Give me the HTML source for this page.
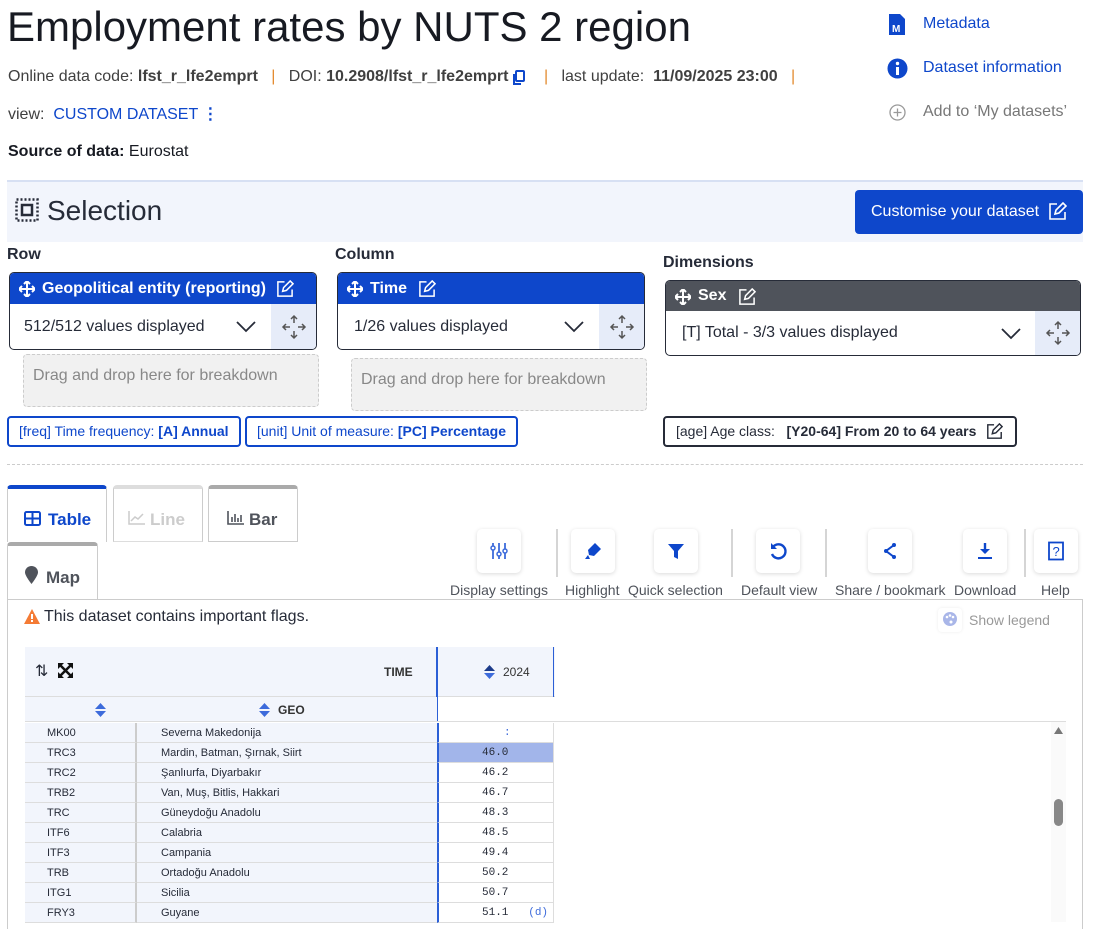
<!DOCTYPE html>
<html><head><meta charset="utf-8"><style>
*{box-sizing:border-box;margin:0;padding:0}
body{width:1101px;height:922px;overflow:hidden;background:#fff;font-family:"Liberation Sans",Arial,sans-serif;color:#262b38;position:relative}
.a{position:absolute;white-space:nowrap}
.blue{color:#0e47cb}
.dbox{position:absolute;border:1px solid #262b38;border-radius:5px;overflow:hidden;background:#fff}
.dh{height:31px;background:#0e47cb;color:#fff;font-weight:bold;font-size:16px;line-height:31px;padding-left:32px;position:relative}
.dh svg{position:absolute;top:8px}
.db{position:relative;height:46px;font-size:16px;line-height:46px;padding-left:14px}
.mv{position:absolute;right:0;top:0;width:45px;height:46px;background:#e6ecf9}
.drag{position:absolute;background:#f1f1f1;border:1px dashed #ccc;border-radius:4px;color:#888;font-size:16px;padding:12px 9px}
.chip{position:absolute;height:31px;border:2px solid #0e47cb;border-radius:4px;font-size:14px;color:#0e47cb;line-height:27px;padding:0 10px}
.tab{position:absolute;border:1px solid #ccc;border-top:4px solid #aaa;border-bottom:none;border-radius:4px 4px 0 0;font-size:17px;font-weight:bold;color:#4f535b;line-height:60px;background:#fff}
.tb{position:absolute;top:529px;width:44px;height:44px;border-radius:5px;box-shadow:0 1px 4px rgba(0,0,0,.15);background:#fff}
.tb svg{position:absolute;left:12px;top:12px}
.tl{position:absolute;top:582px;font-size:14px;color:#4f535b;white-space:nowrap}
.sep{position:absolute;top:529px;width:2px;height:48px;background:#d5d5d5}
.row{position:absolute;left:25px;width:530px;height:20px;font-size:11px;line-height:20px}
.row .c{position:absolute;left:0;width:112px;height:20px;background:#f2f5fc;border-right:2px solid #ccc;border-bottom:1px solid #ddd;padding-left:22px}
.row .n{position:absolute;left:112px;width:300px;height:20px;background:#f2f5fc;border-bottom:1px solid #ddd;padding-left:24px}
.row .v{position:absolute;left:412px;width:117px;height:20px;border-left:2px solid #2b5fd6;border-bottom:1px solid #ddd;border-right:1px solid #ddd;font-family:"Liberation Mono",monospace;font-size:11px;padding-left:43px}
</style></head><body>

<div class="a" style="left:7px;top:3px;font-size:42px;color:#171a22">Employment rates by NUTS 2 region</div>
<div class="a" style="left:8px;top:68px;font-size:16px;color:#404040">Online data code: <b>lfst_r_lfe2emprt</b> &nbsp; <span style="color:#e38a2e">|</span> &nbsp; DOI: <b>10.2908/lfst_r_lfe2emprt</b> &nbsp; &nbsp; &nbsp; &nbsp;<span style="color:#e38a2e">|</span> &nbsp; last update: &nbsp;<b>11/09/2025 23:00</b> &nbsp; <span style="color:#e38a2e">|</span></div>
<svg class="a" style="left:512px;top:70px" width="14" height="16" viewBox="0 0 14 16"><rect x="4" y="1" width="8" height="10" rx="1" fill="none" stroke="#0e47cb" stroke-width="2"/><path d="M2 4v10h7" fill="none" stroke="#0e47cb" stroke-width="2"/></svg>
<div class="a" style="left:8px;top:104px;font-size:16px;color:#404040">view: &nbsp;<span class="blue">CUSTOM DATASET</span> <b class="blue">&#8942;</b></div>
<div class="a" style="left:8px;top:143px;font-size:16px;color:#171a22"><b>Source of data:</b> Eurostat</div>

<svg class="a" style="left:889px;top:14px" width="16" height="21" viewBox="0 0 16 21"><path d="M0 0h11l5 5v16H0z" fill="#0e47cb"/><text x="3" y="18" font-size="10" font-weight="bold" fill="#fff" font-family="Liberation Sans">M</text></svg>
<div class="a blue" style="left:923px;top:15px;font-size:16px">Metadata</div>
<svg class="a" style="left:887px;top:58px" width="21" height="21"><circle cx="10.5" cy="10.5" r="10" fill="#0e47cb"/><rect x="9" y="9" width="3" height="8" fill="#fff"/><circle cx="10.5" cy="5.5" r="1.7" fill="#fff"/></svg>
<div class="a blue" style="left:923px;top:59px;font-size:16px">Dataset information</div>
<svg class="a" style="left:889px;top:104px" width="17" height="17"><circle cx="8.5" cy="8.5" r="7.5" fill="none" stroke="#999" stroke-width="1.3"/><path d="M8.5 4.5v8M4.5 8.5h8" stroke="#999" stroke-width="1.3"/></svg>
<div class="a" style="left:923px;top:103px;font-size:16px;color:#777">Add to ‘My datasets’</div>

<div class="a" style="left:7px;top:180px;width:1076px;height:62px;background:#f2f5fc;border-top:2px solid #d7e0f3"></div>
<svg class="a" style="left:15px;top:198px" width="24" height="24" viewBox="0 0 24 24"><rect x="1.5" y="1.5" width="21" height="21" fill="none" stroke="#262b38" stroke-width="2.5" stroke-dasharray="2 2"/><rect x="7" y="7" width="10" height="10" fill="none" stroke="#262b38" stroke-width="2.5"/></svg>
<div class="a" style="left:47px;top:195px;font-size:28px;color:#262b38">Selection</div>
<div class="a" style="left:855px;top:190px;width:228px;height:44px;background:#0e47cb;border-radius:4px;color:#fff;font-size:16px;line-height:44px;padding-left:16px">Customise your dataset</div>
<svg class="a" style="left:1048px;top:202px" width="19" height="19" viewBox="0 0 19 19"><path d="M9 2H2v15h15v-7" fill="none" stroke="#fff" stroke-width="1.6"/><path d="M7 12l1-4 7-7 3 3-7 7z" fill="none" stroke="#fff" stroke-width="1.6"/></svg>

<div class="a" style="left:7px;top:246px;font-size:16px;font-weight:bold">Row</div>
<div class="a" style="left:335px;top:246px;font-size:16px;font-weight:bold">Column</div>
<div class="a" style="left:663px;top:254px;font-size:16px;font-weight:bold">Dimensions</div>

<div class="dbox" style="left:9px;top:272px;width:308px;height:78px">
 <div class="dh"><svg style="left:9px" width="16" height="16" viewBox="0 0 16 16"><path d="M8 0v16M0 8h16M5 3l3-3 3 3M5 13l3 3 3-3M3 5L0 8l3 3M13 5l3 3-3 3" fill="none" stroke="#fff" stroke-width="2"/></svg>Geopolitical entity (reporting) <svg style="left:266px;top:7px" width="18" height="18" viewBox="0 0 19 19"><path d="M9 2H2v15h15v-7" fill="none" stroke="#fff" stroke-width="1.6"/><path d="M7 12l1-4 7-7 3 3-7 7z" fill="none" stroke="#fff" stroke-width="1.6"/></svg></div>
 <div class="db">512/512 values displayed<svg style="position:absolute;left:226px;top:17px" width="20" height="12"><path d="M1 1l9 9 9-9" fill="none" stroke="#262b38" stroke-width="1.8"/></svg><div class="mv"><svg style="position:absolute;left:10px;top:10px" width="26" height="26" viewBox="0 0 26 26"><path d="M13 2v7M13 17v7M2 13h7M17 13h7M10 5l3-3 3 3M10 21l3 3 3-3M5 10l-3 3 3 3M21 10l3 3-3 3" fill="none" stroke="#555" stroke-width="1.5"/></svg></div></div>
</div>
<div class="drag" style="left:23px;top:354px;width:296px;height:53px">Drag and drop here for breakdown</div>

<div class="dbox" style="left:337px;top:272px;width:308px;height:78px">
 <div class="dh"><svg style="left:9px" width="16" height="16" viewBox="0 0 16 16"><path d="M8 0v16M0 8h16M5 3l3-3 3 3M5 13l3 3 3-3M3 5L0 8l3 3M13 5l3 3-3 3" fill="none" stroke="#fff" stroke-width="2"/></svg>Time <svg style="left:80px;top:7px" width="18" height="18" viewBox="0 0 19 19"><path d="M9 2H2v15h15v-7" fill="none" stroke="#fff" stroke-width="1.6"/><path d="M7 12l1-4 7-7 3 3-7 7z" fill="none" stroke="#fff" stroke-width="1.6"/></svg></div>
 <div class="db" style="padding-left:16px">1/26 values displayed<svg style="position:absolute;left:226px;top:17px" width="20" height="12"><path d="M1 1l9 9 9-9" fill="none" stroke="#262b38" stroke-width="1.8"/></svg><div class="mv"><svg style="position:absolute;left:10px;top:10px" width="26" height="26" viewBox="0 0 26 26"><path d="M13 2v7M13 17v7M2 13h7M17 13h7M10 5l3-3 3 3M10 21l3 3 3-3M5 10l-3 3 3 3M21 10l3 3-3 3" fill="none" stroke="#555" stroke-width="1.5"/></svg></div></div>
</div>
<div class="drag" style="left:351px;top:358px;width:296px;height:53px">Drag and drop here for breakdown</div>

<div class="dbox" style="left:665px;top:280px;width:416px;height:76px">
 <div class="dh" style="background:#4f535b;height:30px;line-height:30px"><svg style="left:9px" width="16" height="16" viewBox="0 0 16 16"><path d="M8 0v16M0 8h16M5 3l3-3 3 3M5 13l3 3 3-3M3 5L0 8l3 3M13 5l3 3-3 3" fill="none" stroke="#fff" stroke-width="2"/></svg>Sex <svg style="left:72px;top:7px" width="18" height="18" viewBox="0 0 19 19"><path d="M9 2H2v15h15v-7" fill="none" stroke="#fff" stroke-width="1.6"/><path d="M7 12l1-4 7-7 3 3-7 7z" fill="none" stroke="#fff" stroke-width="1.6"/></svg></div>
 <div class="db" style="padding-left:16px;height:45px;line-height:43px">[T] Total - 3/3 values displayed<svg style="position:absolute;left:335px;top:17px" width="20" height="12"><path d="M1 1l9 9 9-9" fill="none" stroke="#262b38" stroke-width="1.8"/></svg><div class="mv" style="height:45px"><svg style="position:absolute;left:10px;top:9px" width="26" height="26" viewBox="0 0 26 26"><path d="M13 2v7M13 17v7M2 13h7M17 13h7M10 5l3-3 3 3M10 21l3 3 3-3M5 10l-3 3 3 3M21 10l3 3-3 3" fill="none" stroke="#555" stroke-width="1.5"/></svg></div></div>
</div>

<div class="chip" style="left:7px;top:416px;width:234px">[freq] Time frequency: <b>[A] Annual</b></div>
<div class="chip" style="left:245px;top:416px;width:273px">[unit] Unit of measure: <b>[PC] Percentage</b></div>
<div class="chip" style="left:663px;top:416px;width:354px;border-color:#262b38;color:#262b38;padding-left:11px">[age] Age class: &nbsp; <b>[Y20-64] From 20 to 64 years</b></div>
<svg class="a" style="left:986px;top:423px" width="17" height="17" viewBox="0 0 19 19"><path d="M9 2H2v15h15v-7" fill="none" stroke="#262b38" stroke-width="1.6"/><path d="M7 12l1-4 7-7 3 3-7 7z" fill="none" stroke="#262b38" stroke-width="1.6"/></svg>

<div class="a" style="left:7px;top:464px;width:1076px;border-top:1px dashed #ccc"></div>

<div class="tab" style="left:7px;top:485px;width:100px;height:57px;border-top-color:#0e47cb;color:#0e47cb;padding-left:40px;line-height:62px">Table</div>
<svg class="a" style="left:24px;top:511px" width="17" height="15"><rect x="1" y="1" width="15" height="13" rx="1.5" fill="none" stroke="#0e47cb" stroke-width="2"/><path d="M1 7.5h15M8.5 1v13" stroke="#0e47cb" stroke-width="2"/></svg>
<div class="tab" style="left:113px;top:485px;width:90px;height:57px;border-top-color:#ddd;color:#ccc;padding-left:36px;line-height:62px;border-bottom:1px solid #ddd">Line</div>
<svg class="a" style="left:128px;top:511px" width="17" height="14"><path d="M1 0v13h16" fill="none" stroke="#ccc" stroke-width="1.5"/><path d="M3 10l4-4 3 2 5-5" fill="none" stroke="#ccc" stroke-width="1.5"/></svg>
<div class="tab" style="left:208px;top:485px;width:90px;height:57px;padding-left:40px;line-height:62px;border-bottom:1px solid #ccc">Bar</div>
<svg class="a" style="left:227px;top:511px" width="17" height="14"><path d="M1 0v13h16M5 11V6M8 11V3M11 11V7M14 11V4" fill="none" stroke="#4f535b" stroke-width="1.6"/></svg>
<div class="tab" style="left:7px;top:542px;width:91px;height:58px;padding-left:38px;line-height:64px">Map</div>
<svg class="a" style="left:25px;top:566px" width="13" height="18" viewBox="0 0 13 18"><path d="M6.5 0C3 0 0 2.7 0 6.3 0 10 6.5 18 6.5 18S13 10 13 6.3C13 2.7 10 0 6.5 0z" fill="#4f535b"/></svg>

<div class="tb" style="left:477px"><svg width="20" height="20" viewBox="0 0 20 20"><path d="M4 2v16M10 2v16M16 2v16" stroke="#3d6bdb" stroke-width="1.8"/><circle cx="4" cy="7" r="2" fill="#fff" stroke="#3d6bdb" stroke-width="1.5"/><circle cx="10" cy="13" r="2" fill="#fff" stroke="#3d6bdb" stroke-width="1.5"/><circle cx="16" cy="10" r="2" fill="#fff" stroke="#3d6bdb" stroke-width="1.5"/></svg></div>
<div class="tl" style="left:450px">Display settings</div>
<div class="sep" style="left:556px"></div>
<div class="tb" style="left:571px"><svg width="20" height="20" viewBox="0 0 20 20"><path d="M12 2l6 6-7 7-5-1-1-5z" fill="#0e47cb"/><path d="M5 14l-3 4h5z" fill="#0e47cb"/></svg></div>
<div class="tl" style="left:565px">Highlight</div>
<div class="tb" style="left:654px"><svg width="20" height="20" viewBox="0 0 20 20"><path d="M2 3h16l-6 7v8l-4-2v-6z" fill="#0e47cb"/></svg></div>
<div class="tl" style="left:628px">Quick selection</div>
<div class="sep" style="left:731px"></div>
<div class="tb" style="left:756px"><svg width="20" height="20" viewBox="0 0 20 20"><path d="M5 6A7 7 0 1 1 4 13" fill="none" stroke="#0e47cb" stroke-width="2.4"/><path d="M3 2v6h6z" fill="#0e47cb"/></svg></div>
<div class="tl" style="left:741px">Default view</div>
<div class="sep" style="left:825px"></div>
<div class="tb" style="left:868px"><svg width="20" height="20" viewBox="0 0 20 20"><path d="M14 4l-8 6 8 6" fill="none" stroke="#0e47cb" stroke-width="2"/><circle cx="14" cy="4" r="2" fill="#0e47cb"/><circle cx="6" cy="10" r="2" fill="#0e47cb"/><circle cx="14" cy="16" r="2" fill="#0e47cb"/></svg></div>
<div class="tl" style="left:835px">Share / bookmark</div>
<div class="tb" style="left:963px"><svg width="20" height="20" viewBox="0 0 20 20"><path d="M10 2v10" stroke="#0e47cb" stroke-width="2.4"/><path d="M5 8l5 5 5-5z" fill="#0e47cb"/><path d="M3 17h14" stroke="#0e47cb" stroke-width="2"/></svg></div>
<div class="tl" style="left:954px">Download</div>
<div class="sep" style="left:1024px"></div>
<div class="tb" style="left:1034px"><svg width="20" height="20" viewBox="0 0 20 20"><rect x="3" y="1.5" width="14" height="17" fill="none" stroke="#0e47cb" stroke-width="1.8"/><text x="6.5" y="15" font-size="13" fill="#0e47cb" font-family="Liberation Sans">?</text></svg></div>
<div class="tl" style="left:1041px">Help</div>

<div class="a" style="left:7px;top:599px;width:1076px;height:330px;border:1px solid #ccc;border-bottom:none"></div>
<svg class="a" style="left:24px;top:609px" width="16" height="15"><path d="M8 0L16 15H0z" fill="#f47b35"/><rect x="7" y="5" width="2" height="5" fill="#fff"/><rect x="7" y="11" width="2" height="2" fill="#fff"/></svg>
<div class="a" style="left:44px;top:608px;font-size:16px;color:#262b38">This dataset contains important flags.</div>
<div class="a" style="left:938px;top:608px;width:24px;height:24px;border-radius:4px;box-shadow:0 0 3px rgba(0,0,0,.08)"></div>
<svg class="a" style="left:943px;top:612px" width="14" height="14"><circle cx="7" cy="7" r="7" fill="#a9b6e8"/><circle cx="4" cy="5" r="1.3" fill="#fff"/><circle cx="7" cy="3.5" r="1.3" fill="#fff"/><circle cx="10" cy="5" r="1.3" fill="#fff"/><circle cx="8" cy="10" r="1.5" fill="#fff"/></svg>
<div class="a" style="left:969px;top:612px;font-size:14px;color:#999">Show legend</div>

<div class="a" style="left:25px;top:647px;width:530px;height:50px;background:#f2f5fc;border-bottom:1px solid #ddd"></div>
<div class="a" style="left:436px;top:647px;width:2px;height:75px;background:#2b5fd6"></div>
<div class="a" style="left:553px;top:647px;width:1px;height:50px;background:#2b5fd6"></div>
<div class="a" style="left:35px;top:661px;font-size:16px">&#8645;</div>
<svg class="a" style="left:58px;top:663px" width="15" height="15"><path d="M1 1l13 13M14 1L1 14" stroke="#111" stroke-width="2.5"/><path d="M0 0h6L0 6zM15 0v6L9 0zM0 15V9l6 6zM15 15H9l6-6z" fill="#111"/></svg>
<div class="a" style="left:384px;top:665px;font-size:12px;font-weight:bold;color:#333">TIME</div>
<svg class="a" style="left:484px;top:665px" width="11" height="14"><path d="M0 6l5.5-6 5.5 6z" fill="#1c3b8a"/><path d="M0 8l5.5 6 5.5-6z" fill="#3d6bdb"/></svg>
<div class="a" style="left:503px;top:665px;font-size:12px;color:#333">2024</div>
<div class="a" style="left:25px;top:697px;width:412px;height:25px;background:#f2f5fc;border-bottom:1px solid #ddd"></div>
<div class="a" style="left:437px;top:721px;width:629px;height:1px;background:#ddd"></div>
<svg class="a" style="left:95px;top:703px" width="11" height="14"><path d="M0 6l5.5-6 5.5 6zM0 8l5.5 6 5.5-6z" fill="#3d6bdb"/></svg>
<svg class="a" style="left:259px;top:703px" width="11" height="14"><path d="M0 6l5.5-6 5.5 6zM0 8l5.5 6 5.5-6z" fill="#3d6bdb"/></svg>
<div class="a" style="left:278px;top:703px;font-size:12px;font-weight:bold;color:#333">GEO</div>

<div class="row" style="top:723px"><div class="c">MK00</div><div class="n">Severna Makedonija</div><div class="v" style="color:#3d6bdb;padding-left:65px">:</div></div>
<div class="row" style="top:743px"><div class="c">TRC3</div><div class="n">Mardin, Batman, Şırnak, Siirt</div><div class="v" style="background:#a2b5ea">46.0</div></div>
<div class="row" style="top:763px"><div class="c">TRC2</div><div class="n">Şanlıurfa, Diyarbakır</div><div class="v">46.2</div></div>
<div class="row" style="top:783px"><div class="c">TRB2</div><div class="n">Van, Muş, Bitlis, Hakkari</div><div class="v">46.7</div></div>
<div class="row" style="top:803px"><div class="c">TRC</div><div class="n">Güneydoğu Anadolu</div><div class="v">48.3</div></div>
<div class="row" style="top:823px"><div class="c">ITF6</div><div class="n">Calabria</div><div class="v">48.5</div></div>
<div class="row" style="top:843px"><div class="c">ITF3</div><div class="n">Campania</div><div class="v">49.4</div></div>
<div class="row" style="top:863px"><div class="c">TRB</div><div class="n">Ortadoğu Anadolu</div><div class="v">50.2</div></div>
<div class="row" style="top:883px"><div class="c">ITG1</div><div class="n">Sicilia</div><div class="v">50.7</div></div>
<div class="row" style="top:903px"><div class="c">FRY3</div><div class="n">Guyane</div><div class="v">51.1 &nbsp; <span style="color:#3d6bdb">(d)</span></div></div>

<div class="a" style="left:1051px;top:722px;width:15px;height:200px;background:#fafafa"></div>
<svg class="a" style="left:1054px;top:727px" width="9" height="7"><path d="M0 7l4.5-7 4.5 7z" fill="#777"/></svg>
<div class="a" style="left:1054px;top:799px;width:9px;height:27px;border-radius:5px;background:#888"></div>
</body></html>
